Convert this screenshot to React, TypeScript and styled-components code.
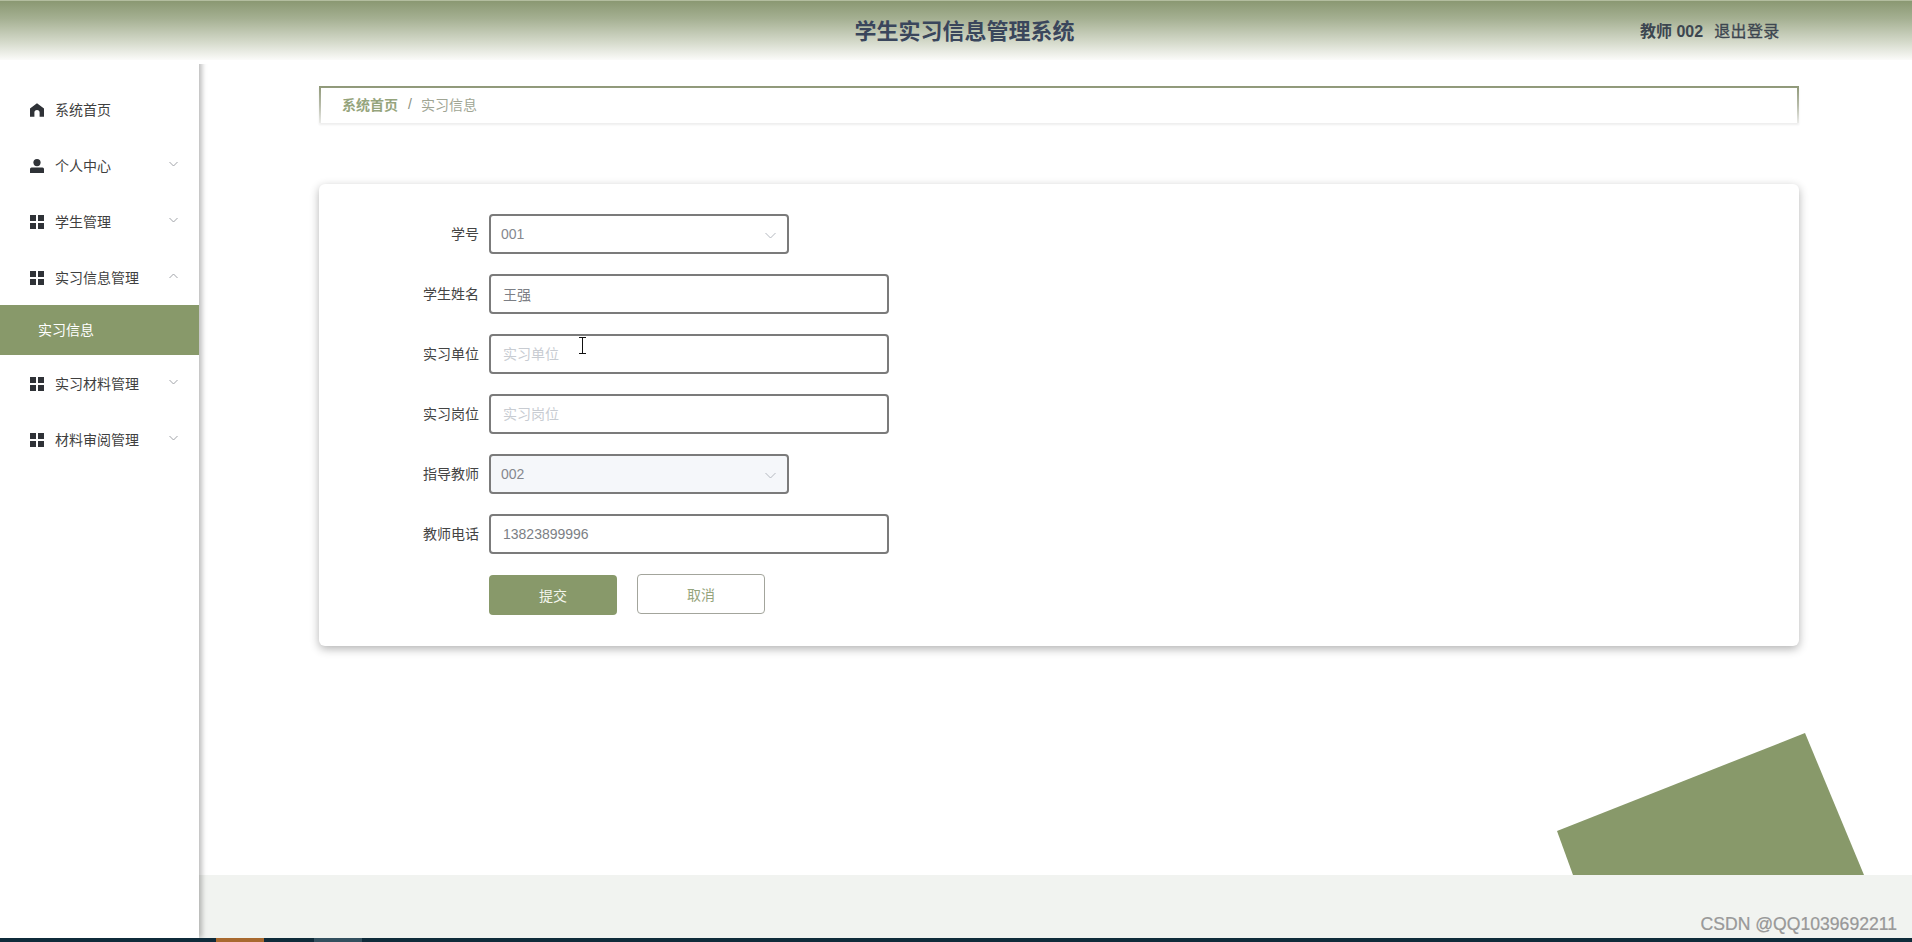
import React from "react";
import styled, { createGlobalStyle } from "styled-components";

const FONT = `"Liberation Sans", "Noto Sans CJK SC", sans-serif`;
const GREEN = "#88996a";

const Global = createGlobalStyle`
  html, body { margin: 0; padding: 0; height: 100%; overflow: hidden; background: #fff; }
  #root { height: 100%; }
  * { box-sizing: border-box; }
`;

const Page = styled.div`
  height: 100vh;
  display: flex;
  flex-direction: column;
  position: relative;
  font-family: ${FONT};
  background: #fff;
`;

const Header = styled.header`
  height: 60px;
  flex: none;
  position: relative;
  display: flex;
  align-items: center;
  justify-content: center;
  border-top: 1px solid #b3bd9f;
  background: linear-gradient(180deg, #8a9872 0%, #a5b092 30%, #d5dacb 70%, #fbfbf9 100%);
`;

const Title = styled.h1`
  margin: 0 0 3px 17px;
  font-size: 22px;
  font-weight: 700;
  color: #3a465c;
`;

const UserBox = styled.div`
  position: absolute;
  left: 1640px;
  top: 21px;
  display: flex;
  gap: 11px;
  font-size: 16px;
  line-height: 20px;
  color: #3d4650;
`;

const UserName = styled.span`
  font-weight: 700;
`;

const Logout = styled.span`
  font-weight: 400;
  -webkit-text-stroke: 0.3px #3d4650;
  letter-spacing: 0.4px;
`;

const Body = styled.div`
  flex: 1;
  min-height: 0;
  display: flex;
`;

const Sidebar = styled.nav`
  width: 199px;
  flex: none;
  padding-top: 22px;
  background: #fff;
  box-shadow: 3px 0 5px rgba(0, 0, 0, 0.26);
  clip-path: inset(4px -12px 0 0);
  position: relative;
  z-index: 2;
`;

const MenuItem = styled.div`
  height: 56px;
  display: flex;
  align-items: center;
  gap: 11px;
  padding: 0 21px 0 30px;
  font-size: 14px;
  color: #3f3f3f;
`;

const MenuLabel = styled.span`
  flex: 1;
  margin-bottom: 3px;
`;

const Chevron = styled.svg`
  width: 9px;
  height: 6px;
  margin-top: -5px;
  fill: none;
  stroke: #a0a3a8;
  stroke-width: 1;
`;

const SubItem = styled.div`
  height: 50px;
  margin-top: -1px;
  margin-bottom: 1px;
  padding: 0 0 3px 38px;
  display: flex;
  align-items: center;
  font-size: 14px;
  color: #fff;
  background: ${GREEN};
`;

const Glyph = styled.svg`
  width: 14px;
  height: 14px;
  flex: none;
  fill: #2f3237;
`;

const Main = styled.main`
  flex: 1;
  min-width: 0;
  display: flex;
  flex-direction: column;
`;

const Content = styled.div`
  flex: 1;
  padding: 26px 113px 0 120px;
`;

const Breadcrumb = styled.div`
  height: 37px;
  padding: 0 0 4px 21px;
  display: flex;
  align-items: center;
  gap: 10px;
  font-size: 14px;
  border-top: 2px solid #8f9878;
  border-left: 2px solid transparent;
  border-right: 2px solid transparent;
  border-image: linear-gradient(180deg, #8f9878 0%, #b8bcaa 50%, #f2f2f2 100%) 2;
  border-bottom: 0;
  box-shadow: 0 2px 2px rgba(0, 0, 0, 0.07);
`;

const CrumbLink = styled.span`
  font-weight: 700;
  color: #95a47c;
`;

const CrumbSep = styled.span`
  color: #8a8f80;
`;

const CrumbCurrent = styled.span`
  margin-left: -1px;
  color: #a0a594;
`;

const Card = styled.section`
  margin-top: 61px;
  padding: 30px 30px 31px;
  display: flex;
  flex-direction: column;
  gap: 20px;
  border-radius: 6px;
  background: #fff;
  box-shadow: 0 3px 10px rgba(0, 0, 0, 0.3);
`;

const Row = styled.div`
  display: flex;
  align-items: center;
  gap: 10px;
`;

const Label = styled.label`
  width: 130px;
  padding-bottom: 2px;
  text-align: right;
  font-size: 14px;
  color: #444;
`;

const FieldWrap = styled.div`
  position: relative;
`;

const TextInput = styled.input`
  display: block;
  width: 400px;
  height: 40px;
  padding: 0 13px 0 12px;
  border: 2px solid #7b7b7b;
  border-radius: 4px;
  outline: none;
  font: 14px ${FONT};
  color: #7c7f85;
  background: #fff;
  &::placeholder {
    color: #c8ccd2;
    opacity: 1;
  }
`;

const SelectBox = styled.div<{ $disabled?: boolean }>`
  width: 300px;
  height: 40px;
  padding: 0 11px 0 10px;
  display: flex;
  align-items: center;
  justify-content: space-between;
  border: 2px solid #7b7b7b;
  border-radius: 4px;
  font-size: 14px;
  color: #85888e;
  background: ${(p) => (p.$disabled ? "#f5f7fa" : "#fff")};
`;

const SelectArrow = styled.svg`
  width: 11px;
  height: 7px;
  margin-top: 2px;
  fill: none;
  stroke: #b4b8bf;
  stroke-width: 1;
`;

const IBeam = styled.svg`
  position: absolute;
  left: 89px;
  top: 3px;
  width: 9px;
  height: 17px;
  fill: none;
  stroke: #111;
  stroke-width: 1;
  pointer-events: none;
`;

const Actions = styled.div`
  display: flex;
  align-items: flex-start;
  gap: 20px;
  margin-left: 140px;
`;

const SubmitButton = styled.button`
  width: 128px;
  height: 40px;
  margin-top: 1px;
  border: 0;
  border-radius: 4px;
  font: 14px ${FONT};
  color: #f4f6ee;
  background: ${GREEN};
`;

const CancelButton = styled.button`
  width: 128px;
  height: 40px;
  border: 1px solid #a3a59c;
  border-radius: 4px;
  font: 14px ${FONT};
  color: #95a47c;
  background: #fff;
`;

const FooterBand = styled.footer`
  height: 63px;
  flex: none;
  position: relative;
  background: #f1f3f0;
`;

const Wedge = styled.svg`
  position: absolute;
  right: 48px;
  bottom: 100%;
  width: 307px;
  height: 142px;
  fill: ${GREEN};
`;

const Watermark = styled.span`
  position: absolute;
  right: 15px;
  bottom: 3px;
  font-size: 17.6px;
  line-height: 22px;
  color: #9a9a9a;
  -webkit-text-stroke: 0.2px #8a8a8a;
`;

const Taskbar = styled.div`
  height: 4px;
  flex: none;
  display: flex;
  background: #0f2b3a;
`;

const TaskSlot = styled.span<{ $offset: number; $color: string }>`
  width: 48px;
  margin-left: ${(p) => p.$offset}px;
  background: ${(p) => p.$color};
`;

const HomeIcon = () => (
  <Glyph viewBox="0 0 14 14">
    <path d="M7 .2 14 5.6V13.8H9.6V9.6A2.6 2.6 0 0 0 4.4 9.6V13.8H0V5.6Z" />
  </Glyph>
);

const PersonIcon = () => (
  <Glyph viewBox="0 0 14 14">
    <circle cx="7" cy="3.6" r="3.6" />
    <path d="M1.5 8.6H12.5A1.5 1.5 0 0 1 14 10.1V14H0V10.1A1.5 1.5 0 0 1 1.5 8.6Z" />
  </Glyph>
);

const GridIcon = () => (
  <Glyph viewBox="0 0 14 14">
    <rect x="0" y="0" width="6" height="6" />
    <rect x="8" y="0" width="6" height="6" />
    <rect x="0" y="8" width="6" height="6" />
    <rect x="8" y="8" width="6" height="6" />
  </Glyph>
);

const Arrow = ({ up }: { up?: boolean }) => (
  <Chevron viewBox="0 0 9 6">
    <path d={up ? "M.5 5 4.5 1 8.5 5" : "M.5 1 4.5 5 8.5 1"} />
  </Chevron>
);

const Select = ({ value, disabled }: { value: string; disabled?: boolean }) => (
  <SelectBox $disabled={disabled}>
    <span>{value}</span>
    <SelectArrow viewBox="0 0 11 7">
      <path d="M.5 1 5.5 6 10.5 1" />
    </SelectArrow>
  </SelectBox>
);

type Entry = { label: string; icon: React.ReactNode; arrow?: string };

const menuBefore: Entry[] = [
  { label: "系统首页", icon: <HomeIcon /> },
  { label: "个人中心", icon: <PersonIcon />, arrow: "down" },
  { label: "学生管理", icon: <GridIcon />, arrow: "down" },
  { label: "实习信息管理", icon: <GridIcon />, arrow: "up" },
];

const menuAfter: Entry[] = [
  { label: "实习材料管理", icon: <GridIcon />, arrow: "down" },
  { label: "材料审阅管理", icon: <GridIcon />, arrow: "down" },
];

const renderItem = (m: Entry) => (
  <MenuItem key={m.label}>
    {m.icon}
    <MenuLabel>{m.label}</MenuLabel>
    {m.arrow && <Arrow up={m.arrow === "up"} />}
  </MenuItem>
);

export default function App() {
  return (
    <Page>
      <Global />
      <Header>
        <Title>学生实习信息管理系统</Title>
        <UserBox>
          <UserName>教师 002</UserName>
          <Logout>退出登录</Logout>
        </UserBox>
      </Header>
      <Body>
        <Sidebar>
          {menuBefore.map(renderItem)}
          <SubItem>实习信息</SubItem>
          {menuAfter.map(renderItem)}
        </Sidebar>
        <Main>
          <Content>
            <Breadcrumb>
              <CrumbLink>系统首页</CrumbLink>
              <CrumbSep>/</CrumbSep>
              <CrumbCurrent>实习信息</CrumbCurrent>
            </Breadcrumb>
            <Card>
              <Row>
                <Label>学号</Label>
                <Select value="001" />
              </Row>
              <Row>
                <Label>学生姓名</Label>
                <TextInput readOnly value="王强" />
              </Row>
              <Row>
                <Label>实习单位</Label>
                <FieldWrap>
                  <TextInput readOnly placeholder="实习单位" />
                  <IBeam viewBox="0 0 9 17">
                    <path d="M1 .5H8M4.5 .5V16.5M1 16.5H8" />
                  </IBeam>
                </FieldWrap>
              </Row>
              <Row>
                <Label>实习岗位</Label>
                <TextInput readOnly placeholder="实习岗位" />
              </Row>
              <Row>
                <Label>指导教师</Label>
                <Select value="002" disabled />
              </Row>
              <Row>
                <Label>教师电话</Label>
                <TextInput readOnly value="13823899996" />
              </Row>
              <Actions>
                <SubmitButton>提交</SubmitButton>
                <CancelButton>取消</CancelButton>
              </Actions>
            </Card>
          </Content>
          <FooterBand>
            <Wedge viewBox="0 0 307 142">
              <polygon points="0,98 248,0 307,142 16,142" />
            </Wedge>
            <Watermark>CSDN @QQ1039692211</Watermark>
          </FooterBand>
        </Main>
      </Body>
      <Taskbar>
        <TaskSlot $offset={216} $color="#a8692f" />
        <TaskSlot $offset={50} $color="#33505f" />
      </Taskbar>
    </Page>
  );
}
